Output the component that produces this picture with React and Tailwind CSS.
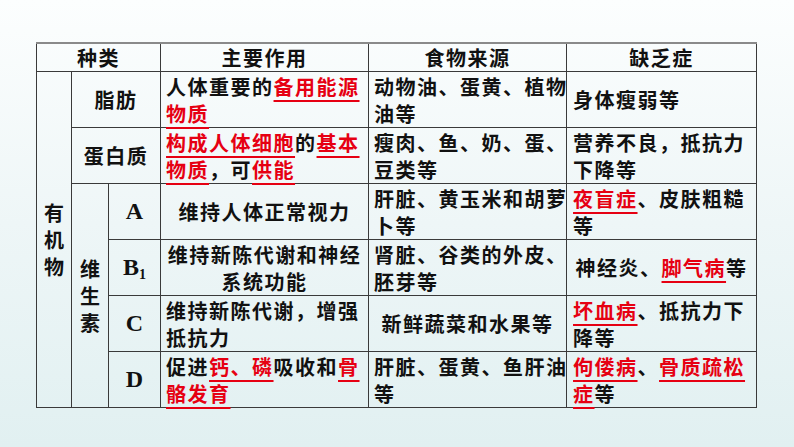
import React from 'react';

const R = ({ children }) => (
  <span className="text-[#e60012] underline decoration-[#e60012] decoration-[1.5px] underline-offset-[5px]">{children}</span>
);

export default function App() {
  const cell = 'border border-[#3a3a3a] align-middle p-0 leading-[27px] whitespace-nowrap';
  const left = `${cell} text-left pl-[5px]`;
  const center = `${cell} text-center`;
  const letter = `${cell} text-center font-['Liberation_Serif',serif] text-[24px] tracking-normal`;
  const head = `${center} border-t-2 border-t-[#8a8a8a] leading-[24px]`;

  return (
    <div className="w-[794px] h-[447px] overflow-hidden bg-gradient-to-b from-[#fcfefe] via-[#eef6f7] to-[#e1f0f1] pt-[42px] pl-[36px] font-['Noto_Sans_CJK_SC',sans-serif] font-bold text-[20px] tracking-[1.5px] text-[#111]">
      <table className="border-collapse table-fixed w-[720px]">
        <colgroup>
          <col className="w-[35px]" />
          <col className="w-[37px]" />
          <col className="w-[52px]" />
          <col className="w-[208px]" />
          <col className="w-[198px]" />
          <col className="w-[190px]" />
        </colgroup>
        <tbody>
          <tr className="h-[26px]">
            <td colSpan={3} className={head}>种类</td>
            <td className={head}>主要作用</td>
            <td className={head}>食物来源</td>
            <td className={head}>缺乏症</td>
          </tr>
          <tr className="h-[56px]">
            <td rowSpan={6} className={`${center} leading-[26px] tracking-normal`}>有<br />机<br />物</td>
            <td colSpan={2} className={center}>脂肪</td>
            <td className={left}>人体重要的<R>备用能源</R><br /><R>物质</R></td>
            <td className={`${left} pl-[4px]`}>动物油、蛋黄、植物<br />油等</td>
            <td className={`${left} pl-[6px]`}>身体瘦弱等</td>
          </tr>
          <tr className="h-[56px]">
            <td colSpan={2} className={center}>蛋白质</td>
            <td className={left}><R>构成人体细胞</R>的<R>基本</R><br /><R>物质</R>，可<R>供能</R></td>
            <td className={`${left} pl-[4px]`}>瘦肉、鱼、奶、蛋、<br />豆类等</td>
            <td className={`${left} pl-[6px]`}>营养不良，抵抗力<br />下降等</td>
          </tr>
          <tr className="h-[56px]">
            <td rowSpan={4} className={`${center} leading-[26px] tracking-normal`}>维<br />生<br />素</td>
            <td className={letter}>A</td>
            <td className={center}>维持人体正常视力</td>
            <td className={`${left} pl-[4px]`}>肝脏、黄玉米和胡萝<br />卜等</td>
            <td className={`${left} pl-[6px]`}><R>夜盲症</R>、皮肤粗糙<br />等</td>
          </tr>
          <tr className="h-[56px]">
            <td className={letter}>B<sub className="text-[14px] align-baseline relative top-[4px]">1</sub></td>
            <td className={center}>维持新陈代谢和神经<br />系统功能</td>
            <td className={`${left} pl-[4px]`}>肾脏、谷类的外皮、<br />胚芽等</td>
            <td className={center}>神经炎、<R>脚气病</R>等</td>
          </tr>
          <tr className="h-[56px]">
            <td className={letter}>C</td>
            <td className={left}>维持新陈代谢，增强<br />抵抗力</td>
            <td className={center}>新鲜蔬菜和水果等</td>
            <td className={`${left} pl-[6px]`}><R>坏血病</R>、抵抗力下<br />降等</td>
          </tr>
          <tr className="h-[56px]">
            <td className={letter}>D</td>
            <td className={left}>促进<R>钙、磷</R>吸收和<R>骨</R><br /><R>骼发育</R></td>
            <td className={`${left} pl-[4px]`}>肝脏、蛋黄、鱼肝油<br />等</td>
            <td className={`${left} pl-[6px]`}><R>佝偻病</R>、<R>骨质疏松</R><br /><R>症</R>等</td>
          </tr>
        </tbody>
      </table>
    </div>
  );
}
